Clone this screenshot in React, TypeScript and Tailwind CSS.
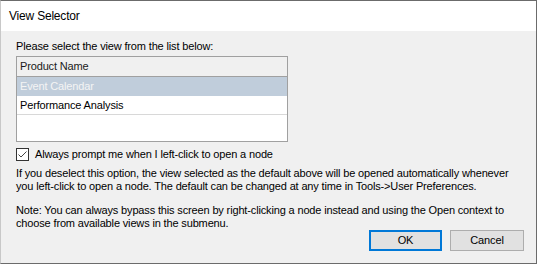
import React from "react";

export default function App() {
  return (
    <div
      className="w-[537px] h-[264px] flex flex-col border-t border-r border-b border-l border-t-[#6b6b6b] border-r-[#6b6b6b] border-b-[#6b6b6b] border-l-[#c8c8c8] bg-[#f0f0f0] text-[11px] tracking-[-0.15px] text-black overflow-hidden whitespace-nowrap"
      style={{ fontFamily: '"Liberation Sans", Arial, sans-serif' }}
    >
      <div className="h-[30px] bg-white flex items-center pl-[8px] shrink-0">
        <span className="text-[12px] tracking-[-0.2px]">View Selector</span>
      </div>
      <div className="flex flex-col pl-[15px] pr-[12px] pt-[8px]">
        <div className="h-[15px] leading-[15px]">Please select the view from the list below:</div>
        <div className="mt-[2px] w-[272px] h-[86px] border border-[#a0a0a0] bg-white flex flex-col">
          <div className="h-[20px] border-b border-[#a0a0a0] bg-[#f0f0f0] flex items-center pl-[3px] text-[#1a1a1a]">
            Product Name
          </div>
          <div className="h-[19px] bg-[#c0cddb] flex items-center pl-[3px] text-[#f4f4f4]">
            Event Calendar
          </div>
          <div className="h-[19px] border-b border-[#d8d8d8] flex items-center pl-[3px]">
            Performance Analysis
          </div>
        </div>
        <div className="mt-[5px] h-[14px] flex items-center gap-[6px]">
          <div className="w-[13px] h-[13px] border border-[#333] bg-white flex items-center justify-center">
            <svg width="11" height="11" viewBox="0 0 11 11">
              <path d="M1.5 5.5 L4 8 L9.5 2.5" fill="none" stroke="#444" strokeWidth="1" />
            </svg>
          </div>
          <span>Always prompt me when I left-click to open a node</span>
        </div>
        <div className="mt-[6px] leading-[13px]">
          <div>If you deselect this option, the view selected as the default above will be opened automatically whenever</div>
          <div>you left-click to open a node. The default can be changed at any time in Tools-&gt;User Preferences.</div>
        </div>
        <div className="mt-[11px] leading-[13px]">
          <div>Note: You can always bypass this screen by right-clicking a node instead and using the Open context to</div>
          <div>choose from available views in the submenu.</div>
        </div>
        <div className="flex justify-end gap-[8px] mt-[0px] pr-[0px]">
          <button className="w-[73px] h-[21px] border-2 border-[#0078d7] bg-[#e1e1e1] flex items-center justify-center">
            OK
          </button>
          <button className="w-[74px] h-[21px] border border-[#adadad] bg-[#e1e1e1] flex items-center justify-center">
            Cancel
          </button>
        </div>
      </div>
    </div>
  );
}
